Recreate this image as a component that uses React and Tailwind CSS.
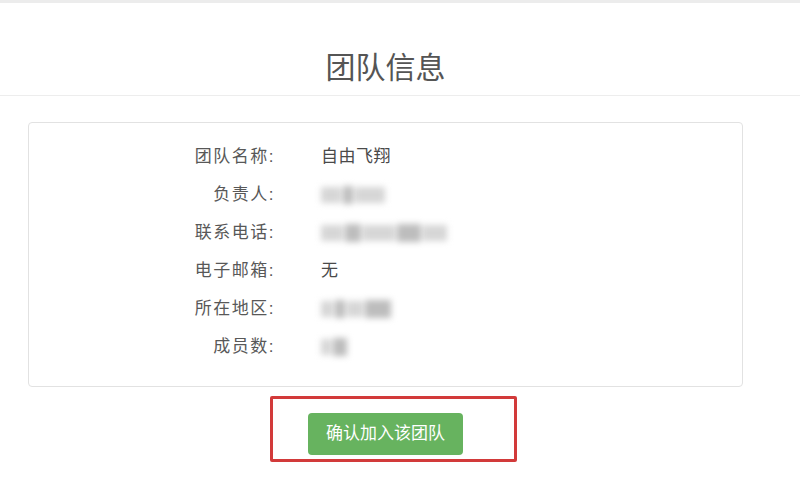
const font = { fontFamily: '"Liberation Sans", "Noto Sans CJK SC", sans-serif' }

const rows = [
  { label: '团队名称:', value: '自由飞翔' },
  { label: '负责人:', blur: [20, 10, 30] },
  { label: '联系电话:', blur: [22, 16, 32, 24, 24] },
  { label: '电子邮箱:', value: '无' },
  { label: '所在地区:', blur: [12, 10, 16, 26] },
  { label: '成员数:', blur: [10, 14] },
]

function Blurred({ parts }) {
  return (
    <span className="flex items-center gap-[2px] blur-[3px]">
      {parts.map((w, i) => (
        <span
          key={i}
          className={i % 2 ? 'h-[18px] bg-[#bdbdbd]' : 'h-[16px] bg-[#d6d6d6]'}
          style={{ width: w }}
        />
      ))}
    </span>
  )
}

export default function App() {
  return (
    <div className="w-[800px] h-[477px] bg-white overflow-hidden" style={font}>
      <div className="h-[3px] bg-[#ececec]" />
      <div className="h-[93px] border-b border-[#ededed] flex items-end">
        <div className="w-[715px] ml-[28px] text-center text-[30px] leading-none text-[#555] pb-[12px]">
          团队信息
        </div>
      </div>

      <div className="w-[715px] ml-[28px] mt-[26px]">
        {/* Info card */}
        <div className="h-[265px] border border-[#e2e2e2] rounded-[4px] pt-[15px]">
          {rows.map((r) => (
            <div key={r.label} className="flex items-center h-[38px] text-[17px]">
              <span className="w-[246px] text-right text-[#585858] tracking-[1.5px]">{r.label}</span>
              <span className="ml-[46px] text-[#4a4a4a] tracking-[0.5px]">
                {r.value ? r.value : <Blurred parts={r.blur} />}
              </span>
            </div>
          ))}
        </div>

        {/* Join button */}
        <div className="flex justify-center mt-[26px]">
          <div className="relative">
            <button className="w-[155px] h-[42px] rounded-[4px] bg-[#67b35f] text-white text-[17px]">
              确认加入该团队
            </button>
            <div className="absolute left-[-38px] top-[-17px] w-[247px] h-[66px] border-[3px] border-[#d23a3a] rounded-[2px]" />
          </div>
        </div>
      </div>
    </div>
  )
}
